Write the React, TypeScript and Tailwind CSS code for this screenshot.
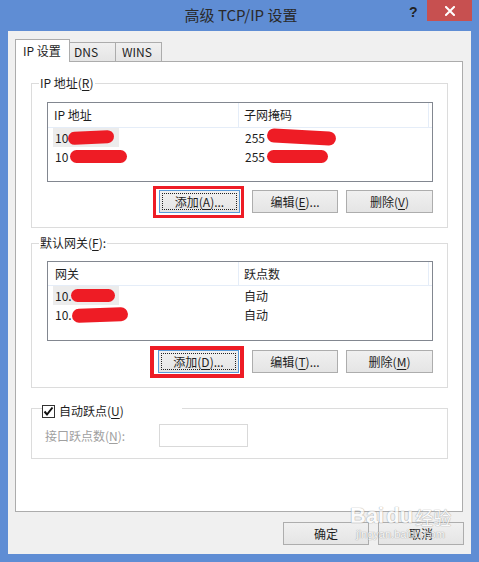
import React from "react";

const U = ({ children }: { children: React.ReactNode }) => (
  <span className="underline underline-offset-[2px] decoration-[1px]">{children}</span>
);

function Btn({ children, className = "" }: { children: React.ReactNode; className?: string }) {
  return (
    <div
      className={
        "h-[23px] border border-[#adadad] bg-gradient-to-b from-[#f0f0f0] to-[#e5e5e5] flex items-center justify-center text-[12px] leading-[16px] text-[#1e1e1e] " +
        className
      }
    >
      {children}
    </div>
  );
}

function FocusBtn({ children }: { children: React.ReactNode }) {
  return (
    <div className="w-[81px] h-[23px] border border-[#5b9bd8] bg-gradient-to-b from-[#f0f0f0] to-[#e5e5e5] p-[2px] text-[12px] leading-[16px] text-[#1e1e1e]">
      <div className="h-full border border-dotted border-[#222] flex items-center justify-center">{children}</div>
    </div>
  );
}

function Blob({ className }: { className: string }) {
  return <span className={"absolute bg-[#ee1c25] rounded-full " + className} />;
}

export default function App() {
  return (
    <div className="w-[479px] h-[562px] bg-[#5f8dd4] flex flex-col font-['Noto_Sans_CJK_SC',sans-serif] text-[#1e1e1e] relative overflow-hidden">
      {/* title bar */}
      <div className="h-[31px] shrink-0 flex items-start relative">
        <div className="flex-1 h-[30px] flex items-center justify-center text-[15px] leading-[20px] text-[#2a2a2a] pl-[3px]">
          高级 TCP/IP 设置
        </div>
        <div className="absolute left-[409px] top-[3px] text-[14px] font-bold leading-[18px] text-[#222] font-['Liberation_Sans',sans-serif]">?</div>
        <div className="absolute left-[427px] top-0 w-[45px] h-[21px] bg-[#c75050] flex items-center justify-center">
          <svg width="10" height="10" viewBox="0 0 10 10">
            <path d="M1 1 L9 9 M9 1 L1 9" stroke="#fff" strokeWidth="2" strokeLinecap="square" />
          </svg>
        </div>
      </div>

      {/* client area */}
      <div className="mx-[8px] h-[523px] bg-[#f0f0f0] flex flex-col pt-[8px]">
        {/* tabs */}
        <div className="ml-[7px] flex items-end h-[22px] relative z-10">
          <div className="w-[55px] h-[23px] -mb-[1px] border border-b-0 border-[#acacac] bg-white flex items-start pt-[3px] pl-[7px] text-[12px] leading-[16px]">
            IP 设置
          </div>
          <div className="w-[46px] h-[19px] border border-l-0 border-b-0 border-[#acacac] bg-gradient-to-b from-[#f0f0f0] to-[#e5e5e5] flex items-center pl-[4px] text-[12px] leading-[16px]">
            DNS
          </div>
          <div className="w-[46px] h-[19px] border border-l-0 border-b-0 border-[#acacac] bg-gradient-to-b from-[#f0f0f0] to-[#e5e5e5] flex items-center pl-[6px] text-[12px] leading-[16px]">
            WINS
          </div>
        </div>

        {/* panel */}
        <div className="ml-[7px] w-[448px] h-[451px] border border-[#acacac] bg-white flex flex-col text-[12px] leading-[16px]">
          {/* group 1 */}
          <div className="ml-[15px] mt-[21px] w-[417px] h-[145px] border border-[#dcdcdc] flex flex-col">
            <div className="-mt-[9px] ml-[7px] px-[1px] bg-white w-fit h-[16px]">
              IP 地址(<U>R</U>)
            </div>
            <div className="ml-[15px] mt-[11px] w-[386px] h-[80px] border border-[#828790] flex flex-col">
              <div className="flex h-[25px] border-b border-[#e5edf8] shrink-0">
                <div className="w-[191px] border-r border-[#e5edf8] pl-[6px] flex items-center">IP 地址</div>
                <div className="w-[190px] border-r border-[#e5edf8] pl-[5px] flex items-center">子网掩码</div>
              </div>
              <div className="flex h-[19px]">
                <div className="w-[191px] pl-[5px] flex">
                  <div className="w-[66px] h-[19px] bg-[#ececec] pl-[2px] flex items-center relative">
                    10
                    <Blob className="left-[15px] top-[3px] w-[46px] h-[13px] rotate-[-3deg]" />
                  </div>
                </div>
                <div className="pl-[6px] flex items-center relative w-[190px]">
                  255
                  <Blob className="left-[28px] top-[2px] w-[69px] h-[14px] rotate-[3deg]" />
                </div>
              </div>
              <div className="flex h-[19px]">
                <div className="w-[191px] pl-[7px] flex items-center relative">
                  10
                  <Blob className="left-[22px] top-[3px] w-[57px] h-[13px]" />
                </div>
                <div className="pl-[6px] flex items-center relative w-[190px]">
                  255
                  <Blob className="left-[28px] top-[3px] w-[61px] h-[13px]" />
                </div>
              </div>
            </div>
            <div className="ml-[15px] mt-[8px] w-[386px] h-[23px] flex items-start justify-end">
              <div className="-mt-[4px] h-[32px] border-[3px] border-[#ee1c25] pt-[1px] pl-[3px] pr-[1px]">
                <FocusBtn>
                  添加(<U>A</U>)...
                </FocusBtn>
              </div>
              <Btn className="ml-[8px] w-[86px]">
                编辑(<U>E</U>)...
              </Btn>
              <Btn className="ml-[8px] w-[87px]">
                删除(<U>V</U>)
              </Btn>
            </div>
          </div>

          {/* group 2 */}
          <div className="ml-[15px] mt-[15px] w-[417px] h-[145px] border border-[#dcdcdc] flex flex-col">
            <div className="-mt-[9px] ml-[7px] px-[1px] bg-white w-fit h-[16px]">
              默认网关(<U>F</U>):
            </div>
            <div className="ml-[15px] mt-[10px] w-[386px] h-[80px] border border-[#828790] flex flex-col">
              <div className="flex h-[24px] border-b border-[#e5edf8] shrink-0">
                <div className="w-[191px] border-r border-[#e5edf8] pl-[7px] flex items-center">网关</div>
                <div className="w-[190px] border-r border-[#e5edf8] pl-[5px] flex items-center">跃点数</div>
              </div>
              <div className="flex h-[19px]">
                <div className="w-[191px] pl-[5px] flex">
                  <div className="w-[66px] h-[19px] bg-[#ececec] pl-[2px] flex items-center relative">
                    10.
                    <Blob className="left-[18px] top-[3px] w-[44px] h-[13px]" />
                  </div>
                </div>
                <div className="pl-[5px] flex items-center w-[190px]">自动</div>
              </div>
              <div className="flex h-[19px]">
                <div className="w-[191px] pl-[7px] flex items-center relative">
                  10.
                  <Blob className="left-[24px] top-[3px] w-[56px] h-[14px] rotate-[-2deg]" />
                </div>
                <div className="pl-[5px] flex items-center w-[190px]">自动</div>
              </div>
            </div>
            <div className="ml-[15px] mt-[9px] w-[386px] h-[23px] flex items-start justify-end">
              <div className="-mt-[4px] h-[32px] border-[4px] border-[#ee1c25] pl-[4px] pr-[1px]">
                <FocusBtn>
                  添加(<U>D</U>)...
                </FocusBtn>
              </div>
              <Btn className="ml-[8px] w-[86px]">
                编辑(<U>T</U>)...
              </Btn>
              <Btn className="ml-[8px] w-[87px]">
                删除(<U>M</U>)
              </Btn>
            </div>
          </div>

          {/* group 3 */}
          <div className="ml-[15px] mt-[20px] w-[417px] h-[51px] border border-[#dcdcdc] flex flex-col">
            <div className="-mt-[6px] ml-[10px] w-[140px] h-[16px] bg-white flex items-center gap-[4px]">
              <div className="w-[13px] h-[13px] border border-[#333] bg-white flex items-center justify-center">
                <svg width="11" height="11" viewBox="0 0 11 11">
                  <path d="M1.5 5.5 L4 8.5 L9.5 1.5" stroke="#111" strokeWidth="2" fill="none" />
                </svg>
              </div>
              <span>
                自动跃点(<U>U</U>)
              </span>
            </div>
            <div className="mt-[5px] ml-[13px] h-[23px] flex items-center text-[#a0a0a0]">
              <div className="w-[114px]">
                接口跃点数(<U>N</U>):
              </div>
              <div className="w-[89px] h-[23px] border border-[#d9d9d9] bg-white" />
            </div>
          </div>
        </div>

        {/* bottom buttons */}
        <div className="mt-[10px] pr-[7px] flex justify-end gap-[9px]">
          <Btn className="w-[86px]">确定</Btn>
          <Btn className="w-[86px]">取消</Btn>
        </div>
      </div>

      {/* watermark */}
      <div className="absolute left-[350px] top-[504px] flex flex-col items-center pointer-events-none opacity-70">
        <div className="flex items-end text-white [text-shadow:0_0_1px_#888,0_0_1px_#888] font-['Liberation_Sans',sans-serif]">
          <span className="text-[22px] font-bold leading-[24px]">Bai</span>
          <span className="text-[22px] font-bold leading-[24px] ml-[2px]">du</span>
          <span className="text-[18px] leading-[22px] ml-[2px] font-['Noto_Sans_CJK_SC',sans-serif]">经验</span>
        </div>
        <div className="text-[11px] leading-[13px] text-white [text-shadow:0_0_1px_#888,0_0_1px_#888] font-['Liberation_Sans',sans-serif]">
          jingyan.baidu.com
        </div>
      </div>
    </div>
  );
}
